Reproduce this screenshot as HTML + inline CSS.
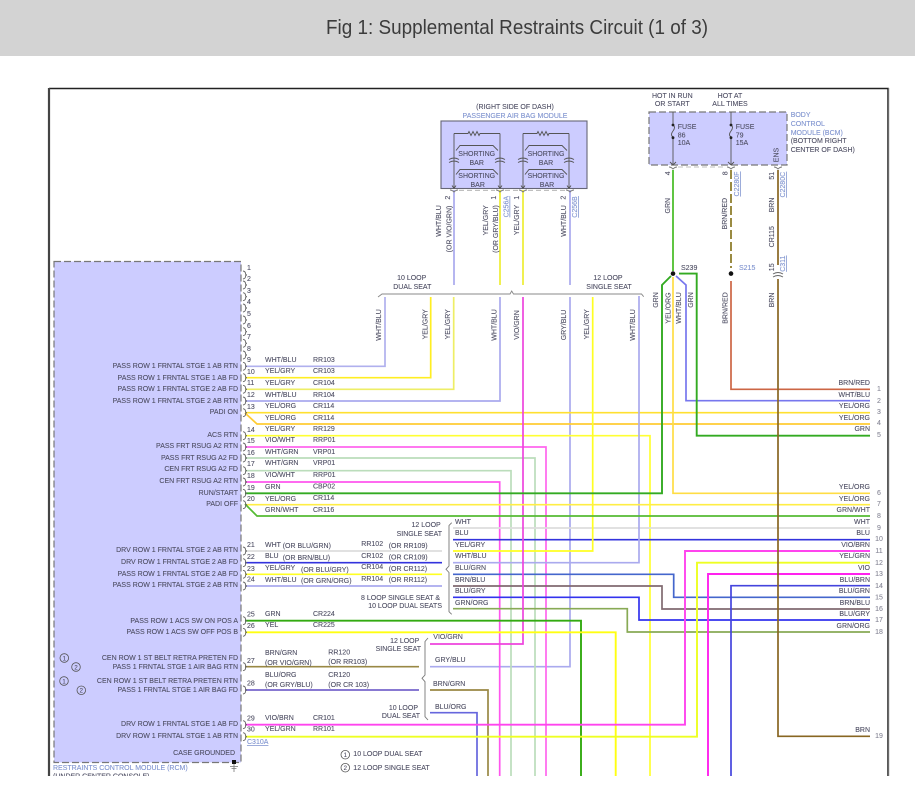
<!DOCTYPE html>
<html><head><meta charset="utf-8"><title>Fig 1: Supplemental Restraints Circuit (1 of 3)</title>
<style>
html,body{margin:0;padding:0;background:#fff;width:915px;height:799px;overflow:hidden}
#h{position:absolute;left:0;top:0;width:915px;height:56px;background:#d3d3d3}
#s{position:absolute;left:0;top:0;filter:blur(.3px)}
text{font-family:"Liberation Sans",sans-serif;font-size:7px;fill:#4f4f64;stroke:#4f4f64;stroke-width:.1}
.e{text-anchor:end}.m{text-anchor:middle}
.b{fill:#7f93cf;stroke:#7f93cf}.n{fill:#8a8a99;stroke:#8a8a99}
.w{fill:none;stroke-width:1.7}
.lk{fill:#7f93cf;stroke:#7f93cf;text-decoration:underline}
</style></head><body>
<div id="h"></div>
<svg id="s" width="915" height="799" viewBox="0 0 915 799" xmlns="http://www.w3.org/2000/svg">
<defs>
<clipPath id="c"><rect x="0" y="60" width="915" height="716"/></clipPath>
<path id="p" fill="none" stroke="#666" stroke-width=".9" d="M243-4q2.500.5 2.500 2.500q0 1.500 1.500 1.500q-1.500 0-1.500 1.500q0 2-2.500 2.500"/>
<path id="r" fill="none" stroke="#555" stroke-width=".9" d="M0 0h14l1-2 2 4 2-4 2 4 2-4 2 4 1-2h20M0 0v55M46 0v55M0 55l-2-3M0 55l2-3M46 55l-2-3M46 55l2-3M-5 26q5-3 10 0M-5 29q5-3 10 0M41 26q5-3 10 0M41 29q5-3 10 0M2 17l4-5h33l5 5M2 41l4-5h33l5 5"/>
<path id="f" fill="none" stroke="#555" stroke-width=".9" d="M0 0v13q3 2 0 6t0 6v28M0 53l-3-3M0 53l3-3"/>
<path id="k" fill="none" stroke="#777" stroke-width=".9" d="M-4 0q2 0 4 2q2-2 4-2"/>
</defs>
<text x="326" y="34" textLength="382" lengthAdjust="spacingAndGlyphs" style="font-size:20px;fill:#3c3c3c;stroke:none">Fig 1: Supplemental Restraints Circuit (1 of 3)</text>

<g clip-path="url(#c)">
<path d="M49 88.500H888V776" fill="none" stroke="#222" stroke-width="1.500"/>
<path d="M49 88V776" fill="none" stroke="#444" stroke-width="2.200"/>
<path d="M889 88V776" fill="none" stroke="#bbb" stroke-width=".8"/>

<rect x="54" y="261.500" width="187" height="501" fill="#ccf" stroke="#777" stroke-width="1.200" stroke-dasharray="7 3"/>
<rect x="441" y="121" width="146" height="67.500" fill="#ccf" stroke="#667" stroke-width="1.100"/>
<rect x="649" y="112" width="138" height="53" fill="#ccf" stroke="#777" stroke-width="1.200" stroke-dasharray="7 3"/>

<!-- wires -->
<g class="w">
<path stroke="#b0b0ee" d="M245 366.300H385V297"/>
<path stroke="#ffee22" d="M245 377.700H430.700V297"/>
<path stroke="#eeee66" d="M245 389.300H453.700V297"/>
<path stroke="#aaaaee" d="M245 401H500V297M454 190V285M570 190V285"/>
<path stroke="#eeee33" d="M500 190V285M523 190V285"/>
<path stroke="#aaaaee" d="M570 297V666.700H430"/>
<path stroke="#ffe030" d="M245 412.700H870"/>
<path stroke="#ffcc33" d="M245 413L257 424H870"/>
<path stroke="#ffff33" d="M245 435.700H650V776"/>
<path stroke="#ff66ee" d="M245 447H546V776"/>
<path stroke="#bbddbb" d="M245 458H535V776"/>
<path stroke="#bbddbb" d="M245 470.700H511V776"/>
<path stroke="#ff55ee" d="M245 482H499.700V776"/>
<path stroke="#ddd" d="M245 551H442M453 528H870"/>
<path stroke="#3333dd" d="M245 562.700H442M453 539.700H870"/>
<path stroke="#ffff22" d="M245 574.300H442M453 551H592.700V297"/>
<path stroke="#aaaaee" d="M245 586H442"/>
<path stroke="#aaaaee" d="M453 562.700H639V296"/>
<path stroke="#4466cc" d="M453 574.300H673.700V597.300H870"/>
<path stroke="#806a70" d="M453 586H662V609H870"/>
<path stroke="#3333ee" d="M453 597.300H639V620H870"/>
<path stroke="#88aa55" d="M453 608.700H627.300V632H870"/>
<path stroke="#ee44dd" d="M523 297V644H430"/>
<path stroke="#998844" d="M245 666.700H419M430 690H488V776"/>
<path stroke="#7766cc" d="M245 690H419"/>
<path stroke="#6666dd" d="M430 712.700H477V776"/>
<path stroke="#ffee44" d="M245 504.700H870"/>
<path stroke="#55bb33" d="M245 504L257 516H870"/>
<path stroke="#ffdd44" d="M673 277V493.300H870"/>
<path stroke="#7777ee" d="M676 276L686 285V400.700H870"/>
<path stroke="#33aa22" stroke-width="1.900" d="M245 493.300H662V285L671 276"/>
<path stroke="#33aa22" stroke-width="1.900" d="M679 273.600H696.700V435.700H870"/>
<path stroke="#44bb22" d="M673 170V271"/>
<path stroke="#33aa11" stroke-width="1.900" d="M245 620.700H581V776"/>
<path stroke="#ffff11" stroke-width="1.900" d="M245 632.300H615.700V776"/>
<path stroke="#ff44ee" stroke-width="1.900" d="M245 724.700H685V551H870"/>
<path stroke="#eeff22" stroke-width="1.900" d="M245 736.700H697V562.700H870"/>
<path stroke="#ff22ee" stroke-width="1.900" d="M870 574H708V776"/>
<path stroke="#4444dd" d="M870 585.700H731V776"/>
<path stroke="#cc6644" d="M731 281V389.300H870"/>
<path stroke="#887722" stroke-width="1.700" stroke-dasharray="9 3" d="M731 170V268"/>
<path stroke="#886622" stroke-width="1.700" d="M778 170V265M778 279V736.300H870"/>
</g>

<!-- brackets -->
<path fill="none" stroke="#888" stroke-width=".9" d="M378 297L382 294H510L511.700 291L513.500 294H641.500L643.700 296.700"/>
<path fill="none" stroke="#777" stroke-width=".9" d="M451.700 522.700L449 525.500V566L446 569.300L449 572.500V611.700L451.700 614.300"/>
<path fill="none" stroke="#777" stroke-width=".9" d="M428 638L425 641.500V675L422 678.300L425 681.700V716.700L428 720"/>

<!-- connector glyphs -->
<g>
<use href="#p" y="275"/><use href="#p" y="285"/><use href="#p" y="296.700"/><use href="#p" y="308"/><use href="#p" y="320"/><use href="#p" y="331.700"/><use href="#p" y="343.300"/><use href="#p" y="355"/>
<use href="#p" y="366.300"/><use href="#p" y="377.700"/><use href="#p" y="389.300"/><use href="#p" y="401"/><use href="#p" y="412.700"/><use href="#p" y="435.700"/><use href="#p" y="447"/><use href="#p" y="458"/><use href="#p" y="470.700"/><use href="#p" y="482"/><use href="#p" y="493.300"/><use href="#p" y="504.700"/>
<use href="#p" y="551"/><use href="#p" y="562.700"/><use href="#p" y="574.300"/><use href="#p" y="586"/><use href="#p" y="620.700"/><use href="#p" y="632.300"/><use href="#p" y="666.700"/><use href="#p" y="690"/><use href="#p" y="724.700"/><use href="#p" y="736.700"/>
</g>
<use href="#r" x="454" y="133.500"/><use href="#r" x="523" y="133.500"/>
<use href="#f" x="673" y="112"/><use href="#f" x="731" y="112"/>
<circle cx="673" cy="125" r="1.400" fill="#222"/><circle cx="673" cy="137.700" r="1.400" fill="#222"/>
<circle cx="731" cy="125" r="1.400" fill="#222"/><circle cx="731" cy="137.700" r="1.400" fill="#222"/>
<use href="#k" x="454" y="190"/><use href="#k" x="500" y="190"/><use href="#k" x="523" y="190"/><use href="#k" x="570" y="190"/>
<use href="#k" x="673" y="167"/><use href="#k" x="731" y="167"/><use href="#k" x="778" y="167"/>
<path d="M459 190.300H495M505 190.300H518M528 190.300H565M678 167H726" stroke="#aaa" stroke-width=".8" stroke-dasharray="5 3" fill="none"/>
<path d="M773 274q5-3 10 0M773 277q5-3 10 0" fill="none" stroke="#666" stroke-width=".9"/>
<circle cx="673" cy="273.600" r="2.300" fill="#111"/><circle cx="731" cy="273.600" r="2.300" fill="#111"/>
<rect x="232" y="760" width="4" height="4" fill="#111"/>
<path d="M234 764V772M230 766.500H238M231.500 768.500H236.500" stroke="#777" stroke-width=".8" fill="none"/>

<!-- circles -->
<g fill="none" stroke="#555" stroke-width=".8">
<circle cx="64.300" cy="658" r="4.300"/><circle cx="76" cy="667" r="4.300"/><circle cx="64" cy="681" r="4.300"/><circle cx="81.300" cy="690.300" r="4.300"/>
<circle cx="345.300" cy="754.700" r="4.300"/><circle cx="345.300" cy="767.700" r="4.300"/>
</g>
<g>
<text class="m" x="64.300" y="660.300" style="font-size:6px">1</text><text class="m" x="76" y="669.300" style="font-size:6px">2</text><text class="m" x="64" y="683.300" style="font-size:6px">1</text><text class="m" x="81.300" y="692.600" style="font-size:6px">2</text>
<text class="m" x="345.300" y="757" style="font-size:6px">1</text><text class="m" x="345.300" y="770" style="font-size:6px">2</text>
</g>

<!-- module labels -->
<g>
<text class="e" x="238" y="368.200">PASS ROW 1 FRNTAL STGE 1 AB RTN</text>
<text class="e" x="238" y="379.800">PASS ROW 1 FRNTAL STGE 1 AB FD</text>
<text class="e" x="238" y="390.800">PASS ROW 1 FRNTAL STGE 2 AB FD</text>
<text class="e" x="238" y="402.800">PASS ROW 1 FRNTAL STGE 2 AB RTN</text>
<text class="e" x="238" y="413.800">PADI ON</text>
<text class="e" x="238" y="436.800">ACS RTN</text>
<text class="e" x="238" y="448.200">PASS FRT RSUG A2 RTN</text>
<text class="e" x="238" y="459.800">PASS FRT RSUG A2 FD</text>
<text class="e" x="238" y="470.800">CEN FRT RSUG A2 FD</text>
<text class="e" x="238" y="482.800">CEN FRT RSUG A2 RTN</text>
<text class="e" x="238" y="494.800">RUN/START</text>
<text class="e" x="238" y="505.800">PADI OFF</text>
<text class="e" x="238" y="551.800">DRV ROW 1 FRNTAL STGE 2 AB RTN</text>
<text class="e" x="238" y="563.800">DRV ROW 1 FRNTAL STGE 2 AB FD</text>
<text class="e" x="238" y="575.800">PASS ROW 1 FRNTAL STGE 2 AB FD</text>
<text class="e" x="238" y="586.800">PASS ROW 1 FRNTAL STGE 2 AB RTN</text>
<text class="e" x="238" y="623.200">PASS ROW 1 ACS SW ON POS A</text>
<text class="e" x="238" y="633.800">PASS ROW 1 ACS SW OFF POS B</text>
<text class="e" x="238" y="659.800">CEN ROW 1 ST BELT RETRA PRETEN FD</text>
<text class="e" x="238" y="669.200">PASS 1 FRNTAL STGE 1 AIR BAG RTN</text>
<text class="e" x="238" y="682.800">CEN ROW 1 ST BELT RETRA PRETEN RTN</text>
<text class="e" x="238" y="692.200">PASS 1 FRNTAL STGE 1 AIR BAG FD</text>
<text class="e" x="238" y="725.800">DRV ROW 1 FRNTAL STGE 1 AB FD</text>
<text class="e" x="238" y="737.800">DRV ROW 1 FRNTAL STGE 1 AB RTN</text>
<text class="e" x="235" y="754.800">CASE GROUNDED</text>
</g>
<text class="b" x="53" y="770.200">RESTRAINTS CONTROL MODULE (RCM)</text>
<text x="53" y="778.500">(UNDER CENTER CONSOLE)</text>

<!-- pin numbers -->
<g>
<text x="247" y="269.800">1</text><text x="247" y="280.800">2</text><text x="247" y="292.800">3</text><text x="247" y="303.800">4</text><text x="247" y="315.800">5</text><text x="247" y="327.800">6</text><text x="247" y="338.800">7</text><text x="247" y="350.800">8</text><text x="247" y="361.800">9</text>
<text x="247" y="373.800">10</text><text x="247" y="385.200">11</text><text x="247" y="397.200">12</text><text x="247" y="408.800">13</text><text x="247" y="431.800">14</text><text x="247" y="442.800">15</text><text x="247" y="454.800">16</text><text x="247" y="465.800">17</text><text x="247" y="477.800">18</text><text x="247" y="489.800">19</text><text x="247" y="500.800">20</text>
<text x="247" y="547.200">21</text><text x="247" y="559.200">22</text><text x="247" y="571.200">23</text><text x="247" y="581.500">24</text><text x="247" y="616.500">25</text><text x="247" y="628">26</text><text x="247" y="663.200">27</text><text x="247" y="685.500">28</text><text x="247" y="720.500">29</text><text x="247" y="731.500">30</text>
</g>

<!-- wire labels col 1 & 2 -->
<g>
<text x="265" y="361.800">WHT/BLU</text><text x="313" y="361.800">RR103</text>
<text x="265" y="372.800">YEL/GRY</text><text x="313" y="372.800">CR103</text>
<text x="265" y="384.800">YEL/GRY</text><text x="313" y="384.800">CR104</text>
<text x="265" y="396.800">WHT/BLU</text><text x="313" y="396.800">RR104</text>
<text x="265" y="407.800">YEL/ORG</text><text x="313" y="407.800">CR114</text>
<text x="265" y="419.800">YEL/ORG</text><text x="313" y="419.800">CR114</text>
<text x="265" y="430.800">YEL/GRY</text><text x="313" y="430.800">RR129</text>
<text x="265" y="442.200">VIO/WHT</text><text x="313" y="442.200">RRP01</text>
<text x="265" y="453.800">WHT/GRN</text><text x="313" y="453.800">VRP01</text>
<text x="265" y="465.200">WHT/GRN</text><text x="313" y="465.200">VRP01</text>
<text x="265" y="477.200">VIO/WHT</text><text x="313" y="477.200">RRP01</text>
<text x="265" y="489.200">GRN</text><text x="313" y="488.500">CBP02</text>
<text x="265" y="500.800">YEL/ORG</text><text x="313" y="500.200">CR114</text>
<text x="265" y="511.800">GRN/WHT</text><text x="313" y="511.800">CR116</text>
<text x="265" y="547.200">WHT</text><text x="282.700" y="547.800">(OR BLU/GRN)</text><text x="361.300" y="546.200">RR102</text><text x="388.700" y="548.200">(OR RR109)</text>
<text x="265" y="557.800">BLU</text><text x="282.700" y="560.200">(OR BRN/BLU)</text><text x="361.300" y="557.800">CR102</text><text x="388.700" y="559.500">(OR CR109)</text>
<text x="265" y="569.800">YEL/GRY</text><text x="301" y="572.200">(OR BLU/GRY)</text><text x="361.300" y="569.200">CR104</text><text x="388.700" y="571.200">(OR CR112)</text>
<text x="265" y="581.800">WHT/BLU</text><text x="301" y="582.800">(OR GRN/ORG)</text><text x="361.300" y="580.800">RR104</text><text x="388.700" y="582.200">(OR RR112)</text>
<text x="265" y="615.800">GRN</text><text x="313" y="615.800">CR224</text>
<text x="265" y="626.800">YEL</text><text x="313" y="626.800">CR225</text>
<text x="265" y="654.800">BRN/GRN</text><text x="328.300" y="654.500">RR120</text>
<text x="265" y="664.800">(OR VIO/GRN)</text><text x="328.300" y="663.800">(OR RR103)</text>
<text x="265" y="676.800">BLU/ORG</text><text x="328.300" y="676.800">CR120</text>
<text x="265" y="686.800">(OR GRY/BLU)</text><text x="328.300" y="686.800">(OR CR 103)</text>
<text x="265" y="720.200">VIO/BRN</text><text x="313" y="720.200">CR101</text>
<text x="265" y="730.800">YEL/GRN</text><text x="313" y="730.800">RR101</text>
<text class="lk" x="247" y="744.200">C310A</text>
</g>

<!-- middle labels -->
<text class="e" x="440.700" y="527.200">12 LOOP</text>
<text class="e" x="442" y="536.200">SINGLE SEAT</text>
<text class="e" x="440" y="599.800">8 LOOP SINGLE SEAT &amp;</text>
<text class="e" x="442" y="608.200">10 LOOP DUAL SEATS</text>
<text x="455" y="523.800">WHT</text><text x="455" y="535.200">BLU</text><text x="455" y="546.800">YEL/GRY</text><text x="455" y="557.800">WHT/BLU</text><text x="455" y="569.800">BLU/GRN</text><text x="455" y="581.800">BRN/BLU</text><text x="455" y="592.800">BLU/GRY</text><text x="455" y="604.800">GRN/ORG</text>
<text class="e" x="419.300" y="642.800">12 LOOP</text>
<text class="e" x="421" y="650.800">SINGLE SEAT</text>
<text x="433.300" y="639.200">VIO/GRN</text>
<text x="435" y="661.800">GRY/BLU</text>
<text x="433" y="685.800">BRN/GRN</text>
<text x="435" y="708.800">BLU/ORG</text>
<text class="e" x="418" y="709.800">10 LOOP</text>
<text class="e" x="420" y="718.200">DUAL SEAT</text>
<text x="353.300" y="755.800">10 LOOP DUAL SEAT</text>
<text x="353.300" y="769.800">12 LOOP SINGLE SEAT</text>

<!-- top labels -->
<text class="m" x="515" y="108.800">(RIGHT SIDE OF DASH)</text>
<text class="m b" x="515" y="117.800">PASSENGER AIR BAG MODULE</text>
<g>
<text class="m" x="476.700" y="155.800">SHORTING</text><text class="m" x="476.700" y="164.800">BAR</text><text class="m" x="476.700" y="177.800">SHORTING</text><text class="m" x="477.700" y="187">BAR</text>
<text class="m" x="546" y="155.800">SHORTING</text><text class="m" x="546" y="164.800">BAR</text><text class="m" x="546" y="177.800">SHORTING</text><text class="m" x="547" y="187">BAR</text>
</g>
<text class="m" x="411.700" y="279.800">10 LOOP</text><text class="m" x="412.300" y="288.800">DUAL SEAT</text>
<text class="m" x="608" y="279.800">12 LOOP</text><text class="m" x="609" y="288.800">SINGLE SEAT</text>
<text class="m" x="672.300" y="97.800">HOT IN RUN</text><text class="m" x="672.300" y="105.800">OR START</text>
<text class="m" x="730" y="97.800">HOT AT</text><text class="m" x="730" y="105.800">ALL TIMES</text>
<text class="b" x="790.700" y="116.800">BODY</text><text class="b" x="790.700" y="125.800">CONTROL</text><text class="b" x="790.700" y="134.800">MODULE (BCM)</text>
<text x="790.700" y="143.200">(BOTTOM RIGHT</text><text x="790.700" y="151.800">CENTER OF DASH)</text>
<text x="677.700" y="128.800">FUSE</text><text x="677.700" y="137.500">86</text><text x="677.700" y="144.800">10A</text>
<text x="735.700" y="128.800">FUSE</text><text x="735.700" y="137.500">79</text><text x="735.700" y="144.800">15A</text>
<text x="681" y="269.800">S239</text>
<text class="b" x="739" y="269.800">S215</text>

<!-- rotated labels -->
<g>
<text class="m" transform="translate(438.700,221) rotate(-90)" dy="2.500">WHT/BLU</text>
<text class="m" transform="translate(449,229) rotate(-90)" dy="2.500">(OR VIO/GRN)</text>
<text class="m" transform="translate(447.700,197.700) rotate(-90)" dy="2.500">2</text>
<text class="m" transform="translate(485.300,220.300) rotate(-90)" dy="2.500">YEL/GRY</text>
<text class="m" transform="translate(495.700,229) rotate(-90)" dy="2.500">(OR GRY/BLU)</text>
<text class="m" transform="translate(493.300,197.700) rotate(-90)" dy="2.500">1</text>
<text class="m lk" transform="translate(506,206.700) rotate(-90)" dy="2.500">C256A</text>
<text class="m" transform="translate(516.700,197.700) rotate(-90)" dy="2.500">1</text>
<text class="m" transform="translate(516.700,220) rotate(-90)" dy="2.500">YEL/GRY</text>
<text class="m" transform="translate(563,197.700) rotate(-90)" dy="2.500">2</text>
<text class="m" transform="translate(563.700,221) rotate(-90)" dy="2.500">WHT/BLU</text>
<text class="m lk" transform="translate(574.700,207) rotate(-90)" dy="2.500">C256B</text>
<text class="m" transform="translate(378.700,325) rotate(-90)" dy="2.500">WHT/BLU</text>
<text class="m" transform="translate(425,324.300) rotate(-90)" dy="2.500">YEL/GRY</text>
<text class="m" transform="translate(447.700,324.300) rotate(-90)" dy="2.500">YEL/GRY</text>
<text class="m" transform="translate(494,325) rotate(-90)" dy="2.500">WHT/BLU</text>
<text class="m" transform="translate(516.700,325) rotate(-90)" dy="2.500">VIO/GRN</text>
<text class="m" transform="translate(563.700,325) rotate(-90)" dy="2.500">GRY/BLU</text>
<text class="m" transform="translate(586.700,324.300) rotate(-90)" dy="2.500">YEL/GRY</text>
<text class="m" transform="translate(632.700,325) rotate(-90)" dy="2.500">WHT/BLU</text>
<text class="m" transform="translate(776,155) rotate(-90)" dy="2.500">ENS</text>
<text class="m" transform="translate(667.700,173.300) rotate(-90)" dy="2.500">4</text>
<text class="m" transform="translate(667.700,205.700) rotate(-90)" dy="2.500">GRN</text>
<text class="m" transform="translate(725,173.300) rotate(-90)" dy="2.500">8</text>
<text class="m lk" transform="translate(736.700,184) rotate(-90)" dy="2.500">C2280F</text>
<text class="m" transform="translate(724.700,213.700) rotate(-90)" dy="2.500">BRN/RED</text>
<text class="m" transform="translate(771.700,175.700) rotate(-90)" dy="2.500">51</text>
<text class="m lk" transform="translate(782.700,184.700) rotate(-90)" dy="2.500">C2280C</text>
<text class="m" transform="translate(771.700,205) rotate(-90)" dy="2.500">BRN</text>
<text class="m" transform="translate(771.700,236.700) rotate(-90)" dy="2.500">CR115</text>
<text class="m" transform="translate(771.700,267.300) rotate(-90)" dy="2.500">15</text>
<text class="m lk" transform="translate(782.700,263.700) rotate(-90)" dy="2.500">C311</text>
<text class="m" transform="translate(655.700,300) rotate(-90)" dy="2.500">GRN</text>
<text class="m" transform="translate(668,308) rotate(-90)" dy="2.500">YEL/ORG</text>
<text class="m" transform="translate(678.300,308) rotate(-90)" dy="2.500">WHT/BLU</text>
<text class="m" transform="translate(690.300,300) rotate(-90)" dy="2.500">GRN</text>
<text class="m" transform="translate(725,308) rotate(-90)" dy="2.500">BRN/RED</text>
<text class="m" transform="translate(771.700,300) rotate(-90)" dy="2.500">BRN</text>
</g>

<!-- right side labels -->
<g>
<text class="e" x="870" y="384.800">BRN/RED</text><text class="e" x="870" y="396.800">WHT/BLU</text><text class="e" x="870" y="407.800">YEL/ORG</text><text class="e" x="870" y="419.800">YEL/ORG</text><text class="e" x="870" y="430.800">GRN</text>
<text class="e" x="870" y="488.800">YEL/ORG</text><text class="e" x="870" y="500.800">YEL/ORG</text><text class="e" x="870" y="511.800">GRN/WHT</text><text class="e" x="870" y="523.800">WHT</text><text class="e" x="870" y="534.800">BLU</text><text class="e" x="870" y="546.800">VIO/BRN</text><text class="e" x="870" y="557.800">YEL/GRN</text><text class="e" x="870" y="570.200">VIO</text><text class="e" x="870" y="581.800">BLU/BRN</text><text class="e" x="870" y="592.800">BLU/GRN</text><text class="e" x="870" y="604.800">BRN/BLU</text><text class="e" x="870" y="615.800">BLU/GRY</text><text class="e" x="870" y="627.800">GRN/ORG</text><text class="e" x="870" y="731.800">BRN</text>
</g>
<g>
<text class="m n" x="879" y="390.800">1</text><text class="m n" x="879" y="403.200">2</text><text class="m n" x="879" y="414.200">3</text><text class="m n" x="879" y="425.200">4</text><text class="m n" x="879" y="437.200">5</text><text class="m n" x="879" y="495.200">6</text><text class="m n" x="879" y="506.200">7</text><text class="m n" x="879" y="518.200">8</text><text class="m n" x="879" y="530.200">9</text><text class="m n" x="879" y="541.200">10</text><text class="m n" x="879" y="553.200">11</text><text class="m n" x="879" y="564.800">12</text><text class="m n" x="879" y="576.200">13</text><text class="m n" x="879" y="587.800">14</text><text class="m n" x="879" y="599.500">15</text><text class="m n" x="879" y="610.800">16</text><text class="m n" x="879" y="622.200">17</text><text class="m n" x="879" y="634.200">18</text><text class="m n" x="879" y="737.800">19</text>
</g>
</g>
</svg>
</body></html>
